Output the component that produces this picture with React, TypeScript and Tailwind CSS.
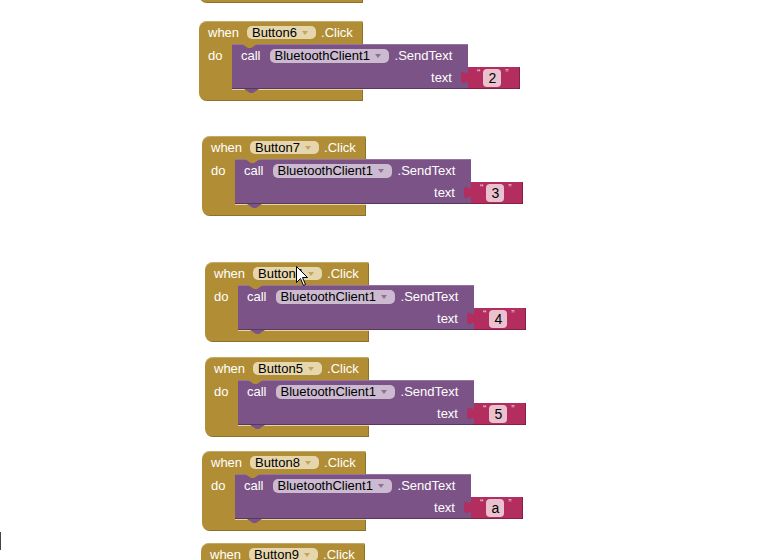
import React from "react";

type Block = { pos: string; button: string; value: string; headerOnly?: boolean };

// where each "when" block sits on the workspace
const blocks: Block[] = [
  { pos: "left-[199px] top-[21px]", button: "Button6", value: "2" },
  { pos: "left-[202px] top-[136px]", button: "Button7", value: "3" },
  { pos: "left-[205px] top-[262px]", button: "Button4", value: "4" },
  { pos: "left-[205px] top-[357px]", button: "Button5", value: "5" },
  { pos: "left-[202px] top-[451px]", button: "Button8", value: "a" },
  { pos: "left-[201px] top-[543px]", button: "Button9", value: "b", headerOnly: true },
];

function Arrow({ fill }: { fill: string }) {
  return (
    <svg width="6" height="4" viewBox="0 0 6 4" className="shrink-0">
      <path d="M0 0H6L3 4Z" fill={fill} />
    </svg>
  );
}

function TextBlock({ value }: { value: string }) {
  return (
    <>
      {/* output tab */}
      <svg width="7" height="22" viewBox="0 0 7 22" className="-ml-[7px] shrink-0">
        <path d="M7 0V3C7 13 0 -3 0 10.5S7 9 7 17V22Z" fill="#b32d5e" />
      </svg>
      <div className="flex h-[22px] w-[52px] items-center bg-[#b32d5e] pl-[9px] shadow-[inset_0_-1px_0_rgba(0,0,0,0.25),inset_-1px_0_0_rgba(0,0,0,0.25)]">
        <span className="-mt-[8px] text-[10px] leading-none text-[#f1d3de]">“</span>
        <span className="ml-[3px] flex h-[18px] w-[18px] items-center justify-center rounded-[4px] bg-[#e9c1cf] text-[14px] leading-none text-black">
          {value}
        </span>
        <span className="-mt-[8px] ml-[4px] text-[10px] leading-none text-[#f1d3de]">”</span>
      </div>
    </>
  );
}

function SendText({ value }: { value: string }) {
  return (
    <div className="relative flex flex-col">
      {/* notch from the gold statement input */}
      <svg width="15" height="4" viewBox="0 0 15 4" className="absolute left-[10px] top-0">
        <path d="M0 0L6 4H9L15 0Z" fill="#b18e35" />
      </svg>
      <div className="flex h-[23px] w-[236px] items-center bg-[#7b5386] pl-[9px] shadow-[inset_0_1px_0_rgba(255,255,255,0.2)]">
        <span>call</span>
        <span className="ml-[9px] flex h-[14px] w-[119px] items-center justify-between rounded-[5px] bg-[#cbbad0] pl-[5px] pr-[8px] leading-none text-black">
          BluetoothClient1
          <Arrow fill="#8f6e99" />
        </span>
        <span className="ml-[6px]">.SendText</span>
      </div>
      <div className="flex">
        <div className="flex h-[22px] w-[236px] items-center justify-end bg-[#7b5386] pr-[16px] shadow-[inset_0_-1px_0_rgba(0,0,0,0.3)]">
          text
        </div>
        <TextBlock value={value} />
      </div>
      {/* next-statement tab */}
      <svg width="15" height="4" viewBox="0 0 15 4" className="absolute left-[12px] top-full">
        <path d="M0 0L6 4H9L15 0Z" fill="#7b5386" />
      </svg>
    </div>
  );
}

function EventBlock({ b }: { b: Block }) {
  return (
    <div className={`absolute ${b.pos} flex flex-col`}>
      <div className="flex h-[23px] w-[164px] items-center rounded-tl-[8px] rounded-tr-[2px] bg-[#b18e35] pl-[9px] shadow-[inset_0_1px_0_rgba(255,255,255,0.25),inset_-1px_0_0_rgba(0,0,0,0.2)]">
        <span>when</span>
        <span className="ml-[8px] flex h-[13px] w-[69px] items-center justify-between rounded-[5px] bg-[#e6d6ad] pl-[5px] pr-[8px] leading-none text-black">
          {b.button}
          <Arrow fill="#c4a55c" />
        </span>
        <span className="ml-[5px]">.Click</span>
      </div>
      {!b.headerOnly && (
        <>
          <div className="flex">
            <div className="w-[33px] bg-[#b18e35] pl-[9px]">
              <div className="flex h-[23px] items-center">do</div>
            </div>
            <SendText value={b.value} />
          </div>
          <div className="h-[12px] w-[164px] rounded-bl-[8px] bg-[#b18e35] shadow-[inset_-1px_-1px_0_rgba(0,0,0,0.2)]">
            <div className="ml-[33px] h-px bg-[#e6d4a4]" />
          </div>
        </>
      )}
    </div>
  );
}

export default function App() {
  return (
    <div className="relative h-[560px] w-[780px] overflow-hidden bg-white font-['Liberation_Sans',Arial,sans-serif] text-[13px] text-white">
      {/* bottom of the block scrolled above the view */}
      <div className="absolute left-[199px] top-[-9px] h-[12px] w-[164px] rounded-bl-[8px] bg-[#b18e35] shadow-[inset_-1px_-1px_0_rgba(0,0,0,0.2)]" />

      {blocks.map((b) => (
        <EventBlock key={b.button} b={b} />
      ))}

      {/* mouse pointer over Button4 */}
      <svg width="13" height="21" viewBox="0 0 13 21" className="absolute left-[296px] top-[266px]">
        <path d="M0.5 0.5V16.5L4.5 12.5L7.5 19.5L9.5 18.5L6.5 11.5H11.5Z" fill="#fff" stroke="#000" strokeWidth="1" />
      </svg>

      {/* stray caret at the left edge */}
      <div className="absolute left-0 top-[532px] h-[18px] w-px bg-[#444]" />
    </div>
  );
}
